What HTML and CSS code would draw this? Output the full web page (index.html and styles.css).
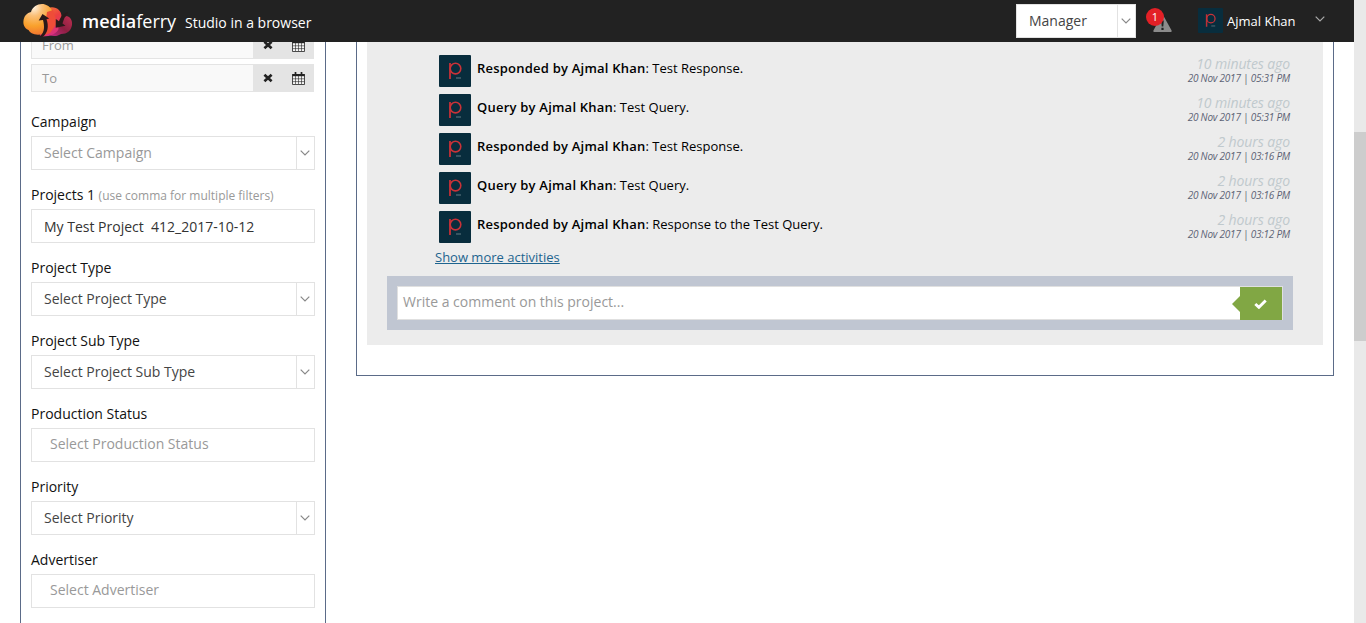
FILE: index.html
```html
<!DOCTYPE html>
<html lang="en">
<head>
<meta charset="utf-8">
<title>mediaferry</title>
<link rel="stylesheet" href="styles.css">
</head>
<body>
<svg class="defs" width="0" height="0">
  <defs>
    <symbol id="chevron" viewBox="0 0 10 6"><path d="M.7 .7 5 5 9.3 .7" fill="none" stroke="currentColor" stroke-width="1.2"/></symbol>
    <symbol id="cross" viewBox="0 0 10 10"><path d="M1.400 1.800 8.600 8.200M8.600 1.800 1.400 8.200" stroke="currentColor" stroke-width="2.700"/></symbol>
    <symbol id="calendar" viewBox="0 0 13 13"><path d="M.5 2h12v2.200H.5z" fill="currentColor"/><path d="M.5 2.500h12v10H.5z" fill="#f4f4f4" stroke="currentColor" stroke-width=".8"/><path d="M.5 2h12v2.200H.5z" fill="currentColor"/><path d="M.6 6.800h11.800M.6 9.600h11.800M3.500 4v8M6.500 4v8M9.500 4v8" fill="none" stroke="currentColor" stroke-width=".6"/><path d="M3.500 0v3.500M9.500 0v3.500" stroke="currentColor" stroke-width="1.700"/></symbol>
    <symbol id="avatar" viewBox="0 0 32 32"><rect width="32" height="32" rx="1" fill="#082d3d"/><path d="M11 8v16" stroke="#bd3037" stroke-width="1.900"/><circle cx="16.500" cy="13.600" r="5.300" fill="none" stroke="#c93238" stroke-width="1.600"/><path d="M17 23h5" stroke="#5d7580" stroke-width="1.100"/></symbol>
  </defs>
</svg>
<div class="page">
  <header class="topbar">
    <svg class="logo" width="50" height="36" viewBox="0 0 50 36">
      <defs>
        <radialGradient id="g1" cx=".35" cy=".1" r=".95"><stop offset="0" stop-color="#fff3e2"/><stop offset=".3" stop-color="#fbc078"/><stop offset=".65" stop-color="#f9a12c"/><stop offset="1" stop-color="#f0702f"/></radialGradient>
        <linearGradient id="g2" x1="0" y1="0" x2=".4" y2="1"><stop offset="0" stop-color="#f58235"/><stop offset=".5" stop-color="#ec4040"/><stop offset="1" stop-color="#d9307c"/></linearGradient>
        <linearGradient id="g3" x1="1" y1="0" x2="0" y2="1"><stop offset="0" stop-color="#c03050"/><stop offset=".5" stop-color="#8d1f42"/><stop offset="1" stop-color="#c42b86"/></linearGradient>
      </defs>
      <path d="M43.500 13C48 14 49.500 18 49 22C48 28 44 31 38 31C35 33 31 34 26 32L32 21Z" fill="url(#g3)"/>
      <path d="M25 5C32 2.500 39 7 38.500 14C38 17 36 19 35 21L35.500 26C34 30 28 34 17 33.500L16 20Z" fill="url(#g2)"/>
      <path d="M8 9C10 3 16 0 22 1.500C27 3 30 7 30 12C29 20 27 28 20 31C12 33 7 30 5.500 27C1 25 0 21 .5 17.500C1 13 4 10 8 9Z" fill="url(#g1)"/>
      <path d="M24 9L30 7L34 20L27 30L20 33L22 24Z" fill="#ee4d38"/>
      <path d="M17 33C22 29 21.500 23 20 17L15.700 17.500L19.500 11L26.200 15.500L23.500 16.200C26 23 25 30 19.500 34L17 34Z" fill="#2a191a"/>
      <path d="M45 10C42 12 41 16 39.500 20.500L42.500 22.800L32.700 24.800L32.800 16L36 18.300C37.500 14 40 10.500 45 9Z" fill="#2a191a"/>
    </svg>
    <div class="brand"><b>media</b>ferry</div>
    <div class="tagline">Studio in a browser</div>
    <div class="role"><span>Manager</span><i class="drop"><svg width="10" height="6"><use href="#chevron"/></svg></i></div>
    <div class="alert">
      <svg width="19" height="17" viewBox="0 0 19 17"><path d="M9.500 0Q10.100 0 10.600 1L18.600 15.500Q19 17 17.800 17H1.200Q0 17 .4 15.500L8.400 1Q8.900 0 9.500 0Z" fill="#8b8b8b"/><path d="M8.200 5.500h2.600l-.5 6h-1.600zM8.400 12.700h2.200v2.200H8.400z" fill="#222"/></svg>
      <span class="count">1</span>
    </div>
    <svg class="user-pic" width="25" height="25"><use href="#avatar"/></svg>
    <div class="user">Ajmal Khan</div>
    <svg class="user-drop" width="10" height="6"><use href="#chevron"/></svg>
  </header>

  <main class="content">
    <aside class="filters">
      <div class="date"><span>From</span><div class="tools"><svg width="10" height="10"><use href="#cross"/></svg><svg width="13" height="13"><use href="#calendar"/></svg></div></div>
      <div class="date"><span>To</span><div class="tools"><svg width="10" height="10"><use href="#cross"/></svg><svg width="13" height="13"><use href="#calendar"/></svg></div></div>
      <div class="field first"><label>Campaign</label><div class="box muted"><span>Select Campaign</span><i class="drop"><svg width="10" height="6"><use href="#chevron"/></svg></i></div></div>
      <div class="field"><label>Projects 1 <small>(use comma for multiple filters)</small></label><div class="box text"><span>My Test Project&nbsp; 412_2017-10-12</span></div></div>
      <div class="field"><label>Project Type</label><div class="box"><span>Select Project Type</span><i class="drop"><svg width="10" height="6"><use href="#chevron"/></svg></i></div></div>
      <div class="field"><label>Project Sub Type</label><div class="box"><span>Select Project Sub Type</span><i class="drop"><svg width="10" height="6"><use href="#chevron"/></svg></i></div></div>
      <div class="field"><label>Production Status</label><div class="box muted multi"><span>Select Production Status</span></div></div>
      <div class="field"><label>Priority</label><div class="box"><span>Select Priority</span><i class="drop"><svg width="10" height="6"><use href="#chevron"/></svg></i></div></div>
      <div class="field"><label>Advertiser</label><div class="box muted multi"><span>Select Advertiser</span></div></div>
    </aside>

    <section class="project">
      <div class="feed">
        <div class="activity"><svg width="32" height="32"><use href="#avatar"/></svg><p><b>Responded by Ajmal Khan</b>: Test Response.</p><div class="when"><em>10 minutes ago</em><time>20 Nov 2017 | 05:31 PM</time></div></div>
        <div class="activity"><svg width="32" height="32"><use href="#avatar"/></svg><p><b>Query by Ajmal Khan</b>: Test Query.</p><div class="when"><em>10 minutes ago</em><time>20 Nov 2017 | 05:31 PM</time></div></div>
        <div class="activity"><svg width="32" height="32"><use href="#avatar"/></svg><p><b>Responded by Ajmal Khan</b>: Test Response.</p><div class="when"><em>2 hours ago</em><time>20 Nov 2017 | 03:16 PM</time></div></div>
        <div class="activity"><svg width="32" height="32"><use href="#avatar"/></svg><p><b>Query by Ajmal Khan</b>: Test Query.</p><div class="when"><em>2 hours ago</em><time>20 Nov 2017 | 03:16 PM</time></div></div>
        <div class="activity"><svg width="32" height="32"><use href="#avatar"/></svg><p><b>Responded by Ajmal Khan</b>: Response to the Test Query.</p><div class="when"><em>2 hours ago</em><time>20 Nov 2017 | 03:12 PM</time></div></div>
        <a class="more">Show more activities</a>
        <div class="comment">
          <div class="entry"><span>Write a comment on this project...</span><div class="send"><svg width="13" height="10" viewBox="0 0 13 10"><path d="M1.300 5 4.900 8.300 11.700 1.500" fill="none" stroke="#fff" stroke-width="2.900"/></svg></div></div>
        </div>
      </div>
    </section>
  </main>
</div>
<div class="scrollbar"><div class="thumb"></div></div>
</body>
</html>
```
FILE: styles.css
```css
* { box-sizing: border-box; }
body {
  margin: 0;
  height: 623px;
  display: flex;
  overflow: hidden;
  background: #fff;
  color: #111;
  font: 14px/20px "Open Sans", sans-serif;
}
svg { display: block; flex: none; }
.defs { position: absolute; }
.page { position: relative; width: 1354px; height: 623px; overflow: hidden; }

.topbar {
  position: absolute;
  inset: 0 0 auto 0;
  z-index: 2;
  height: 42px;
  display: flex;
  align-items: center;
  padding-left: 23px;
  background: #222;
  color: #fff;
}
.brand { margin-left: 9px; width: 95px; font-size: 18px; white-space: nowrap; }
.brand b { font-weight: 600; }
.tagline { margin: 3px 0 0 8px; width: 139px; white-space: nowrap; }
.role {
  margin-left: 692px;
  width: 120px;
  height: 34px;
  display: flex;
  justify-content: space-between;
  align-items: center;
  padding-left: 12px;
  border: 1px solid #e2e2e2;
  background: #fff;
  color: #444;
}
.drop {
  width: 18px;
  align-self: stretch;
  display: flex;
  align-items: center;
  padding-left: 3px;
  border-left: 1px solid #e2e2e2;
  color: #888;
}
.alert { position: relative; margin: 5px 0 0 17px; }
.count {
  position: absolute;
  left: -7px;
  top: -7px;
  width: 18px;
  height: 18px;
  border-radius: 50%;
  background: #e32026;
  font-size: 11px;
  line-height: 18px;
  text-align: center;
}
.user-pic { margin: 0 0 1px 26px; }
.user { margin-left: 4px; width: 72px; font-size: 13px; white-space: nowrap; }
.user-drop { margin: -5px 0 0 16px; color: #aaa; }

.content { display: flex; align-items: flex-start; padding-left: 20px; }
.filters {
  width: 306px;
  height: 623px;
  padding: 31px 10px 0;
  border: solid #5b6b88;
  border-width: 0 1px;
}
.date {
  display: flex;
  width: 283px;
  height: 28px;
  margin-bottom: 5px;
  border: 1px solid #e4e4e4;
  background: #f9f9f9;
  color: #999;
  font-size: 13px;
  line-height: 27px;
  padding-left: 10px;
}
.date span { flex: 1; }
.tools {
  width: 60px;
  display: flex;
  align-items: center;
  gap: 19px;
  padding-left: 10px;
  background: #e4e4e4;
  color: #222;
}
.field { margin-bottom: 15px; }
.field.first { margin-top: 20px; }
.field label { display: block; height: 20px; margin-bottom: 4px; white-space: nowrap; }
.field small { font-size: 12px; color: #999; }
.box {
  width: 284px;
  height: 34px;
  display: flex;
  justify-content: space-between;
  padding-left: 12px;
  border: 1px solid #e2e2e2;
  color: #444;
  line-height: 32px;
}
.box.text { line-height: 34px; color: #333; }
.box.muted > span { color: #999; }
.box.multi { padding-left: 18px; line-height: 30px; }

.project {
  margin-left: 30px;
  width: 978px;
  height: 376px;
  padding: 0 10px 30px;
  border: solid #5b6b88;
  border-width: 0 1px 1px;
}
.feed { height: 345px; padding: 55px 30px 0 20px; background: #ececec; }
.activity {
  display: flex;
  height: 32px;
  margin: 0 3px 7px 52px;
  color: #000;
  font-size: 13px;
}
.activity p { flex: 1; margin: 3px 0 0 6px; }
.activity b { font-weight: 600; letter-spacing: .22px; }
.when { text-align: right; font-style: italic; }
.when em { display: block; font-size: 14px; line-height: 18px; letter-spacing: -.1px; color: #c0c9cd; }
.when time { display: block; font-size: 10px; line-height: 11px; letter-spacing: -.23px; color: #5c6375; }
.more {
  display: block;
  margin: -3px 0 9px 48px;
  color: #1e648f;
  font-size: 13px;
  text-decoration: underline;
}
.comment { height: 54px; padding: 10px; background: #c0c6d2; }
.entry {
  height: 34px;
  display: flex;
  justify-content: space-between;
  padding-left: 5px;
  border: 1px solid #e0e0e0;
  background: #fff;
  color: #999;
  line-height: 30px;
}
.send {
  position: relative;
  width: 42px;
  height: 33px;
  display: flex;
  align-items: center;
  padding-left: 14px;
  background: #81a744;
}
.send::before {
  content: "";
  position: absolute;
  left: -8px;
  top: 9px;
  border: solid transparent;
  border-width: 8px 8px 8px 0;
  border-right-color: #81a744;
}
.scrollbar { width: 12px; height: 623px; padding-top: 132px; background: #e9e9e9; }
.thumb { height: 209px; background: #cdcdcd; }
```
